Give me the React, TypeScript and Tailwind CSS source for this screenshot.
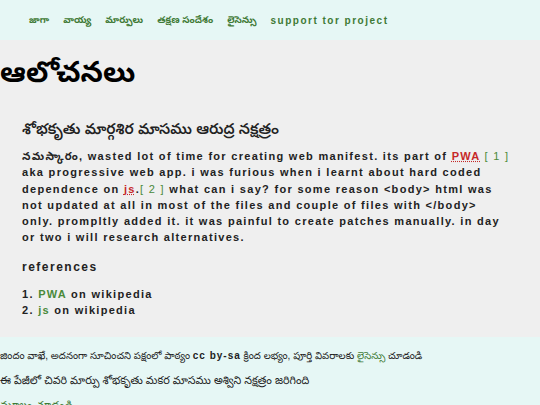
const TE = '"Liberation Sans", "Noto Sans Telugu", "Noto Sans", sans-serif'

const NAV = ['జాగా', 'వాయ్య', 'మార్పులు', 'తక్షణ సందేశం', 'లైసెన్సు']

export default function App() {
  return (
    <div className="min-h-screen bg-[#efefef] text-[#222]" style={{ fontFamily: TE }}>
      {/* header */}
      <header className="h-10 bg-[#e6f7f5] flex items-center pl-[29px] gap-[14px] text-[9.5px] font-bold text-[#3f7a35]">
        {NAV.map((n) => (
          <span key={n}>{n}</span>
        ))}
        <span className="text-[10px] tracking-[1.5px]">support tor project</span>
      </header>

      <main className="pb-[19px]">
        <h1 className="text-[29px] font-bold leading-none text-black pt-[18px]">ఆలోచనలు</h1>

        <div className="pl-[22px] pr-[29px]">
          <h2 className="text-[15px] font-semibold mt-[32px] leading-5">శోభకృతు మార్గశిర మాసము ఆరుద్ర నక్షత్రం</h2>

          <p className="mt-[9px] text-[11px] font-bold tracking-[1.3px] leading-[16.3px] text-[#222]">
            నమస్కారం, wasted lot of time for creating web manifest. its part of{' '}
            <abbr className="text-[#c62828] underline decoration-dotted">PWA</abbr>{' '}
            <span className="text-[#4a8a3a] font-normal whitespace-nowrap">[ 1 ]</span> aka progressive web app. i
            was furious when i learnt about hard coded dependence on{' '}
            <abbr className="text-[#c62828] underline decoration-dotted">js</abbr>.
            <span className="text-[#4a8a3a] font-normal whitespace-nowrap">[ 2 ]</span> what can i say? for some
            reason &lt;body&gt; html was not updated at all in most of the files and couple of files with &lt;/body&gt;
            only. prompltly added it. it was painful to create patches manually. in day or two i will research
            alternatives.
          </p>

          <h3 className="mt-[12px] text-[12px] font-bold tracking-[1.5px]">references</h3>

          <ol className="mt-[10px] text-[11px] font-bold tracking-[1.3px] leading-[16px]">
            <li>
              1. <span className="text-[#4a8a3a]">PWA</span> on wikipedia
            </li>
            <li>
              2. <span className="text-[#4a8a3a]">js</span> on wikipedia
            </li>
          </ol>
        </div>
      </main>

      {/* footer */}
      <footer className="bg-[#e6f7f5] pt-[12px] pb-4 text-[#222]">
        <p className="text-[10px] leading-[14px]">
          జిందం వాఖే, అదనంగా సూచించని పక్షంలో పాఠ్యం <span className="font-bold tracking-[1px]">cc by-sa</span> క్రింద
          లభ్యం, పూర్తి వివరాలకు <span className="text-[#3f7a35]">లైసెన్సు</span> చూడండి
        </p>
        <p className="mt-[10px] text-[11px] leading-[14px]">
          ఈ పేజీలో చివరి మార్పు శోభకృతు మకర మాసము అశ్విని నక్షత్రం జరిగింది
        </p>
        <p className="mt-[10px] text-[11px] text-[#3f7a35]">మూలం చూడండి</p>
      </footer>
    </div>
  )
}
